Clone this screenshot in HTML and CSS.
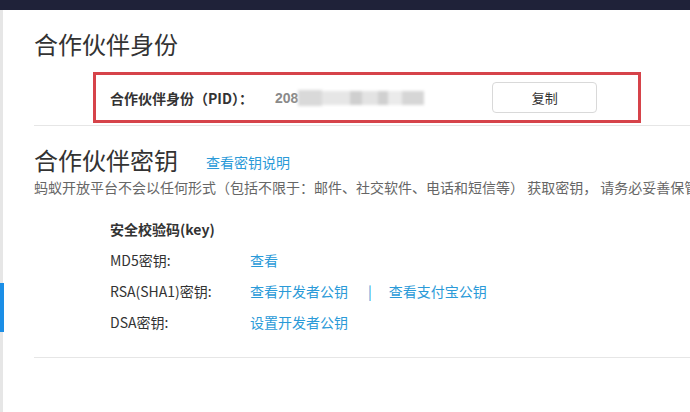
FILE: index.html
```html
<!DOCTYPE html>
<html lang="zh-CN">
<head>
<meta charset="utf-8">
<title>合作伙伴身份</title>
<link rel="stylesheet" href="styles.css">
</head>
<body>
<div class="topbar"></div>
<div class="main">
  <div class="sidebar"><div class="sidebar-active"></div></div>
  <div class="content">
    <section class="section">
      <h1 class="title">合作伙伴身份</h1>
      <div class="pid-box">
        <span class="pid-label">合作伙伴身份（PID）：</span>
        <span class="pid-value">208</span>
        <span class="pid-mask">
          <i class="m m1"></i><i class="m m2"></i><i class="m m3"></i><i class="m m4"></i><i class="m m5"></i><i class="m m6"></i><i class="m m7"></i>
        </span>
        <button class="btn">复制</button>
      </div>
    </section>
    <section class="section section-key">
      <div class="key-head">
        <h2 class="title">合作伙伴密钥</h2>
        <a class="link head-link">查看密钥说明</a>
      </div>
      <p class="notice">蚂蚁开放平台不会以任何形式（包括不限于：邮件、社交软件、电话和短信等） 获取密钥， 请务必妥善保管</p>
      <div class="keys">
        <div class="keys-title">安全校验码(key)</div>
        <div class="key-row"><span class="key-label">MD5密钥:</span><a class="link">查看</a></div>
        <div class="key-row"><span class="key-label">RSA(SHA1)密钥:</span><a class="link">查看开发者公钥</a><span class="sep">|</span><a class="link">查看支付宝公钥</a></div>
        <div class="key-row"><span class="key-label">DSA密钥:</span><a class="link">设置开发者公钥</a></div>
      </div>
    </section>
  </div>
</div>
</body>
</html>
```
FILE: styles.css
```css
* { box-sizing: border-box; }
html, body { margin: 0; padding: 0; background: #fff; }
body {
  font-family: "Noto Sans CJK SC", "Noto Sans", sans-serif;
  color: #333;
  width: 690px;
  height: 412px;
  overflow: hidden;
}
.topbar { height: 10px; background: #1f2239; }
.main { display: flex; height: 402px; }
.sidebar { width: 4px; flex: none; background: linear-gradient(to right, #e6e6e6 3px, #fff 3px); }
.sidebar-active { margin-top: 273px; height: 49px; width: 4px; background: #1b8ee6; }
.content { flex: 1; padding-left: 30px; min-width: 0; overflow: hidden; }
.section { border-bottom: 1px solid #e6e6e6; }
.title {
  margin: 0;
  font-size: 24px;
  font-weight: 400;
  line-height: 34px;
  color: #333;
  white-space: nowrap;
}
.section > .title { margin-top: 17px; }
.pid-box {
  margin: 11px 0 2px 59px;
  width: 548px;
  height: 51px;
  border: 3px solid #d6434a;
  display: flex;
  align-items: center;
  padding-left: 14px;
}
.pid-label { font-size: 14px; font-weight: 700; color: #333; width: 165px; flex: none; white-space: nowrap; }
.pid-value { font-size: 14px; font-weight: 700; color: #8a8a8a; font-family: "Liberation Sans", sans-serif; }
.pid-mask { display: flex; align-items: center; height: 20px; filter: blur(1.5px); width: 190px; flex: none; }
.m { display: block; height: 14px; }
.m1 { width: 24px; background: #d9d9d9; height: 16px; }
.m2 { width: 28px; background: #e6e6e6; }
.m3 { width: 12px; background: #cfcfcf; }
.m4 { width: 16px; background: #e3e3e3; }
.m5 { width: 10px; background: #d0d0d0; }
.m6 { width: 14px; background: #ebebeb; }
.m7 { width: 22px; background: #d6d6d6; }
.btn {
  margin-left: 4px;
  width: 105px;
  height: 31px;
  background: #fff;
  border: 1px solid #d9d9d9;
  border-radius: 4px;
  font-family: inherit;
  font-size: 13px;
  color: #333;
  padding: 0;
  flex: none;
}
.section-key { padding-top: 17px; padding-bottom: 20px; }
.key-head { display: flex; align-items: center; height: 34px; }
.head-link { margin-left: 28px; margin-top: 4px; }
.link { color: #2a9ad8; text-decoration: none; font-size: 14px; white-space: nowrap; }
.notice {
  margin: 0;
  font-size: 14px;
  line-height: 20px;
  color: #666;
  white-space: nowrap;
}
.keys { padding-left: 76px; margin-top: 22px; }
.keys-title { font-size: 14px; font-weight: 700; line-height: 20px; margin-bottom: 5px; }
.key-row { display: flex; align-items: center; height: 31px; font-size: 14px; }
.key-label { width: 140px; color: #333; }
.sep { color: #2a9ad8; margin: 0 17px 0 20px; font-size: 14px; }
```
